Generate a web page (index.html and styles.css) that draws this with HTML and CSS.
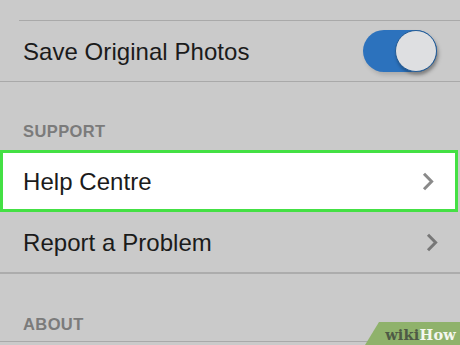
FILE: index.html
```html
<!DOCTYPE html>
<html>
<head>
<meta charset="utf-8">
<link rel="stylesheet" href="styles.css">
</head>
<body>
<div class="screen">
  <div class="top-space"></div>
  <div class="row row-save">
    <span class="label">Save Original Photos</span>
    <div class="toggle"><div class="knob"></div></div>
  </div>
  <div class="section-head">SUPPORT</div>
  <div class="row row-help">
    <span class="label">Help Centre</span>
    <svg class="chev" width="12" height="19" viewBox="0 0 12 19"><path d="M2 1.8 L9.6 9.5 L2 17.2" fill="none" stroke="#8a8a8a" stroke-width="3"/></svg>
  </div>
  <div class="row row-report">
    <span class="label">Report a Problem</span>
    <svg class="chev" width="12" height="19" viewBox="0 0 12 19"><path d="M2 1.8 L9.6 9.5 L2 17.2" fill="none" stroke="#777" stroke-width="3"/></svg>
  </div>
  <div class="section-head about">ABOUT</div>
  <div class="bottom-line"></div>
</div>
<div class="wikihow"><span class="wiki">wiki</span><span class="how">How</span></div>
</body>
</html>
```
FILE: styles.css
```css
html, body {
  margin: 0;
  padding: 0;
}
body {
  width: 460px;
  height: 345px;
  overflow: hidden;
  background: #cacaca;
  font-family: "Liberation Sans", Arial, sans-serif;
  position: relative;
}
.screen {
  display: flex;
  flex-direction: column;
}
.top-space {
  height: 20px;
  margin-left: 19px;
  border-bottom: 1px solid #a9a9a9;
}
.row {
  display: flex;
  align-items: center;
  justify-content: space-between;
  height: 61px;
  padding: 0 22px 0 23px;
  box-sizing: border-box;
}
.label {
  font-size: 24px;
  color: #1b1b1b;
  letter-spacing: 0.05px;
  padding-top: 2px;
}
.row-save {
  height: 61px;
  border-bottom: 1px solid #a9a9a9;
  padding-right: 23px;
}
.toggle {
  width: 74px;
  height: 42px;
  border-radius: 21px;
  background: #2c72bd;
  display: flex;
  justify-content: flex-end;
  box-shadow: 2px 3px 4px rgba(0,0,0,0.15);
}
.knob {
  width: 40px;
  height: 40px;
  border-radius: 50%;
  background: #dedfe1;
  border: 1px solid #245c96;
  box-shadow: 1px 3px 3px rgba(0,0,0,0.25);
}
.section-head {
  height: 68px;
  box-sizing: border-box;
  padding: 41px 0 0 23px;
  font-size: 16.5px;
  font-weight: bold;
  color: #7b7b7b;
  letter-spacing: 0.4px;
  line-height: 16px;
}
.row-help {
  background: #fff;
  border: 3px solid #44e044;
  width: 458px;
  height: 62px;
  padding-left: 20px;
  padding-right: 21px;
}
.row-report {
  height: 62px;
  border-bottom: 2px solid #acacac;
}
.about {
  height: 67px;
  padding-top: 42px;
}
.bottom-line {
  border-top: 1px solid #a9a9a9;
}
.wikihow {
  position: absolute;
  right: 0;
  bottom: 0;
  width: 95px;
  height: 23px;
  background: #8fb26b;
  clip-path: polygon(14px 0, 100% 0, 100% 100%, 0 100%);
  display: flex;
  align-items: center;
  justify-content: flex-end;
  padding-right: 4px;
  padding-top: 1px;
  box-sizing: border-box;
  font-family: "DejaVu Serif", "Liberation Serif", serif;
  font-weight: bold;
  font-size: 14.5px;
  letter-spacing: 0.2px;
}
.wiki { color: #4e5a45; }
.how { color: #f4f7ef; }
```
